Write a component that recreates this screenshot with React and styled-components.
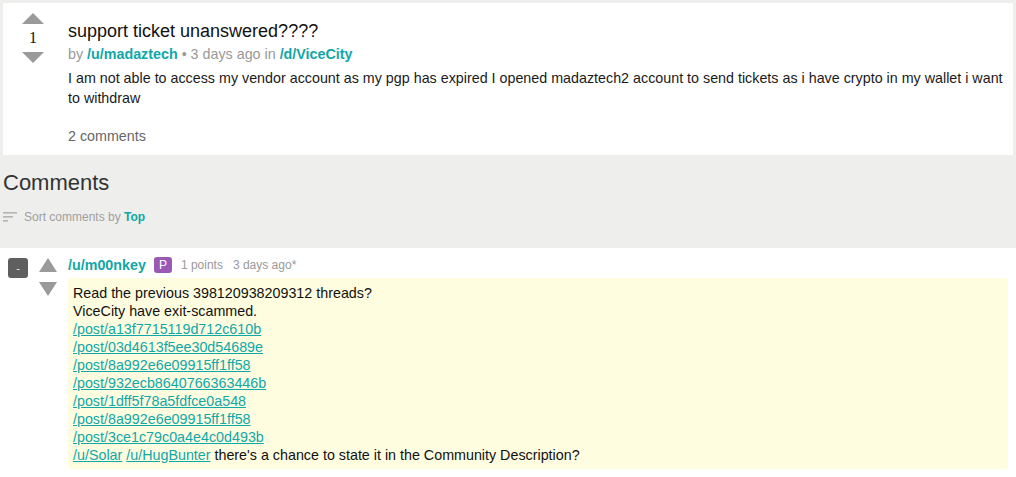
import React from "react";
import styled, { createGlobalStyle } from "styled-components";

const Global = createGlobalStyle`
  html, body { margin: 0; padding: 0; }
  body {
    background: #eeeeec;
    font-family: "Liberation Sans", Arial, sans-serif;
    color: #1a1a1a;
  }
`;

const Page = styled.div`
  display: flex;
  flex-direction: column;
`;

const PostCard = styled.div`
  margin: 3px 3px 0 3px;
  background: #fff;
  display: flex;
  height: 152px;
  box-sizing: border-box;
`;

const VoteCol = styled.div`
  width: 60px;
  display: flex;
  flex-direction: column;
  align-items: center;
  padding-top: 10px;
`;

const Arrow = styled.div`
  width: 0;
  height: 0;
  border-left: ${(p) => p.$w / 2}px solid transparent;
  border-right: ${(p) => p.$w / 2}px solid transparent;
  ${(p) =>
    p.$down
      ? `border-top: ${p.$h}px solid #9a9a9a;`
      : `border-bottom: ${p.$h}px solid #9a9a9a;`}
`;

const Score = styled.div`
  font-family: "Liberation Serif", "Times New Roman", serif;
  font-size: 16px;
  line-height: 20px;
  color: #111;
  margin: 4px 0 4px;
`;

const PostBody = styled.div`
  flex: 1;
  padding: 17px 8px 0 5px;
  display: flex;
  flex-direction: column;
`;

const Title = styled.div`
  font-size: 18px;
  line-height: 22px;
  color: #111;
`;

const Meta = styled.div`
  font-size: 14.3px;
  line-height: 20px;
  color: #999;
  margin-top: 2px;
`;

const TealLink = styled.a`
  color: #10a7a7;
  font-weight: bold;
  text-decoration: none;
`;

const Text = styled.div`
  font-size: 14.3px;
  line-height: 20px;
  color: #1a1a1a;
  margin-top: 4px;
`;

const CommentsCount = styled.div`
  font-size: 14.3px;
  line-height: 20px;
  color: #666;
  margin-top: 18px;
`;

const CommentsHeader = styled.div`
  padding: 14px 3px 0;
  height: 93px;
  box-sizing: border-box;
`;

const HeaderTitle = styled.div`
  font-size: 22px;
  line-height: 28px;
  color: #333;
`;

const SortLine = styled.div`
  display: flex;
  align-items: center;
  gap: 7px;
  margin-top: 12px;
  font-size: 12px;
  line-height: 16px;
  color: #a0a0a0;
`;

const SortTop = styled.span`
  color: #10a7a7;
  font-weight: bold;
`;

const CommentArea = styled.div`
  background: #fff;
  padding: 10px 8px 8px 8px;
  min-height: 229px;
  box-sizing: border-box;
  display: flex;
`;

const Collapse = styled.div`
  width: 20px;
  height: 20px;
  background: #5f5f5f;
  border-radius: 3px;
  color: #eee;
  font-size: 11px;
  display: flex;
  align-items: center;
  justify-content: center;
  line-height: 1;
`;

const CommentVotes = styled.div`
  width: 18px;
  margin-left: 11px;
  display: flex;
  flex-direction: column;
  gap: 10px;
`;

const CommentMain = styled.div`
  flex: 1;
  margin-left: 11px;
  display: flex;
  flex-direction: column;
`;

const CommentHead = styled.div`
  display: flex;
  align-items: center;
  height: 16px;
  margin-top: -1px;
`;

const UserLink = styled.a`
  color: #10a7a7;
  font-weight: bold;
  font-size: 14.3px;
  text-decoration: none;
`;

const Badge = styled.span`
  background: #9b59b6;
  color: #fff;
  font-size: 12px;
  width: 18px;
  height: 16px;
  border-radius: 3px;
  display: inline-flex;
  align-items: center;
  justify-content: center;
  margin-left: 8px;
`;

const Small = styled.span`
  font-size: 12px;
  color: #999;
  margin-left: ${(p) => p.$ml || 0}px;
`;

const CommentBox = styled.div`
  margin-top: 5px;
  background: #fefde0;
  border-radius: 3px;
  padding: 6px 5px 5px;
  font-size: 14.3px;
  line-height: 18px;
  color: #111;
`;

const PostLink = styled.a`
  color: #10a7a7;
  text-decoration: underline;
`;

const SortIcon = () => (
  <svg width="14" height="10" viewBox="0 0 14 10">
    <rect x="0" y="0" width="14" height="1.6" fill="#b5b5b5" />
    <rect x="0" y="4" width="10" height="1.6" fill="#b5b5b5" />
    <rect x="0" y="8" width="5" height="1.6" fill="#b5b5b5" />
  </svg>
);

const links = [
  "/post/a13f7715119d712c610b",
  "/post/03d4613f5ee30d54689e",
  "/post/8a992e6e09915ff1ff58",
  "/post/932ecb8640766363446b",
  "/post/1dff5f78a5fdfce0a548",
  "/post/8a992e6e09915ff1ff58",
  "/post/3ce1c79c0a4e4c0d493b",
];

export default function App() {
  return (
    <>
      <Global />
      <Page>
        <PostCard>
          <VoteCol>
            <Arrow $w={22} $h={11} />
            <Score>1</Score>
            <Arrow $w={22} $h={11} $down />
          </VoteCol>
          <PostBody>
            <Title>support ticket unanswered????</Title>
            <Meta>
              by <TealLink href="#">/u/madaztech</TealLink> • 3 days ago in{" "}
              <TealLink href="#">/d/ViceCity</TealLink>
            </Meta>
            <Text>
              I am not able to access my vendor account as my pgp has expired I
              opened madaztech2 account to send tickets as i have crypto in my
              wallet i want to withdraw
            </Text>
            <CommentsCount>2 comments</CommentsCount>
          </PostBody>
        </PostCard>
        <CommentsHeader>
          <HeaderTitle>Comments</HeaderTitle>
          <SortLine>
            <SortIcon />
            <span>
              Sort comments by <SortTop>Top</SortTop>
            </span>
          </SortLine>
        </CommentsHeader>
        <CommentArea>
          <Collapse>-</Collapse>
          <CommentVotes>
            <Arrow $w={18} $h={14} />
            <Arrow $w={18} $h={14} $down />
          </CommentVotes>
          <CommentMain>
            <CommentHead>
              <UserLink href="#">/u/m00nkey</UserLink>
              <Badge>P</Badge>
              <Small $ml={9}>1 points</Small>
              <Small $ml={10}>3 days ago*</Small>
            </CommentHead>
            <CommentBox>
              Read the previous 398120938209312 threads?
              <br />
              ViceCity have exit-scammed.
              {links.map((l, i) => (
                <React.Fragment key={i}>
                  <br />
                  <PostLink href="#">{l}</PostLink>
                </React.Fragment>
              ))}
              <br />
              <PostLink href="#">/u/Solar</PostLink>{" "}
              <PostLink href="#">/u/HugBunter</PostLink> there's a chance to
              state it in the Community Description?
            </CommentBox>
          </CommentMain>
        </CommentArea>
      </Page>
    </>
  );
}
